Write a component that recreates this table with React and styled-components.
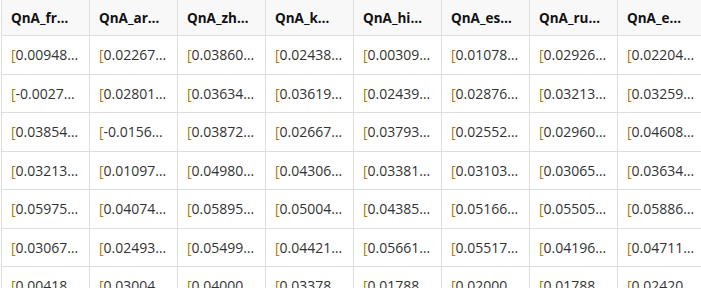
import React from 'react'
import styled, { createGlobalStyle } from 'styled-components'

const GlobalStyle = createGlobalStyle`
body {
  margin: 0;
  background: #fff;
  overflow: hidden;
  font-family: 'Open Sans', 'Noto Sans', sans-serif;
}
`

const Table = styled.div`
display: grid;
grid-template-columns: repeat(8, 88px);
grid-template-rows: 36px repeat(7, 38.5px);
width: max-content;
margin-left: 1px;
border-left: 1px solid #dedede;
`

const HeadCell = styled.div`
display: flex;
align-items: center;
padding-left: 9px;
background: #f8f8f8;
border-right: 1px solid #dedede;
border-bottom: 1px solid #dedede;
font-size: 13.5px;
font-weight: 700;
color: #111;
white-space: nowrap;
overflow: hidden;
`

const Cell = styled.div`
display: flex;
align-items: center;
padding-left: 9px;
border-right: 1px solid #dedede;
border-bottom: 1px solid #dedede;
font-size: 14px;
color: #333;
white-space: nowrap;
overflow: hidden;
`

const Bracket = styled.span`
color: #b57a00;
`

const headers = ['QnA_fr…', 'QnA_ar…', 'QnA_zh…', 'QnA_k…', 'QnA_hi…', 'QnA_es…', 'QnA_ru…', 'QnA_e…']

const rows = [
  ['0.00948', '0.02267', '0.03860', '0.02438', '0.00309', '0.01078', '0.02926', '0.02204'],
  ['-0.0027', '0.02801', '0.03634', '0.03619', '0.02439', '0.02876', '0.03213', '0.03259'],
  ['0.03854', '-0.0156', '0.03872', '0.02667', '0.03793', '0.02552', '0.02960', '0.04608'],
  ['0.03213', '0.01097', '0.04980', '0.04306', '0.03381', '0.03103', '0.03065', '0.03634'],
  ['0.05975', '0.04074', '0.05895', '0.05004', '0.04385', '0.05166', '0.05505', '0.05886'],
  ['0.03067', '0.02493', '0.05499', '0.04421', '0.05661', '0.05517', '0.04196', '0.04711'],
  ['0.00418', '0.03004', '0.04000', '0.03378', '0.01788', '0.02000', '0.01788', '0.02420'],
]

const App = () => {
  return (
    <>
      <GlobalStyle />
      <Table>
        {headers.map(h => (
          <HeadCell key={h}>{h}</HeadCell>
        ))}
        {rows.map((row, r) =>
          row.map((v, c) => (
            <Cell key={r + '-' + c}>
              <Bracket>[</Bracket>
              {v}…
            </Cell>
          ))
        )}
      </Table>
    </>
  )
}

export default App
